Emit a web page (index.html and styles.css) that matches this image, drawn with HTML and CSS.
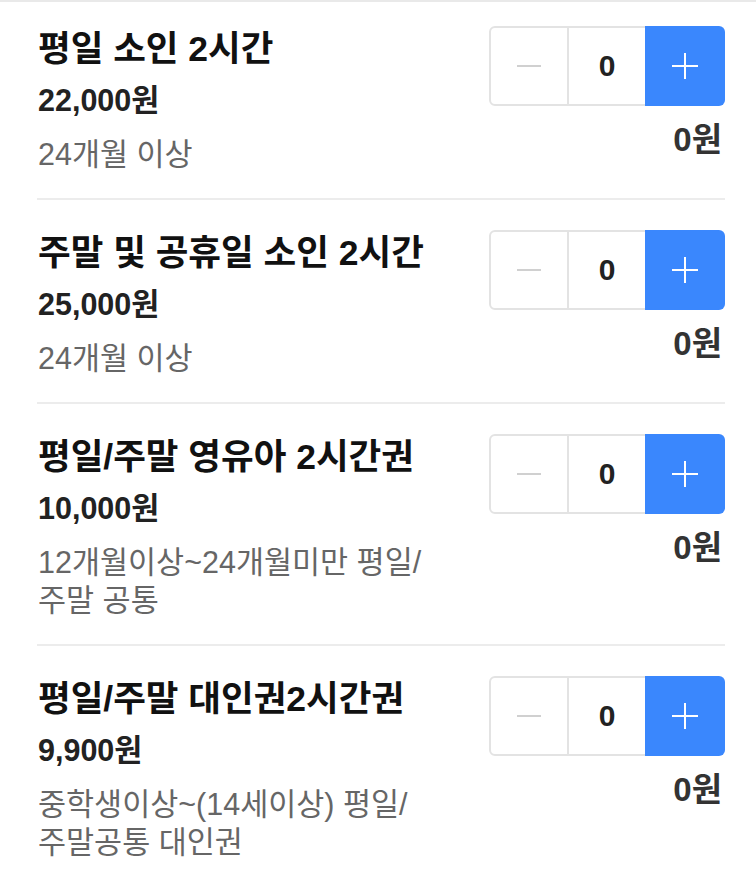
FILE: index.html
```html
<!DOCTYPE html>
<html lang="ko">
<head>
  <meta charset="UTF-8">
  <title>이용권 선택</title>
  <link rel="stylesheet" href="styles.css">
</head>
<body>
  <div class="ticket-list">
    <div class="ticket">
      <div class="info">
        <div class="name">평일 소인 2시간</div>
        <div class="price">22,000원</div>
        <div class="desc">24개월 이상</div>
      </div>
      <div class="order">
        <div class="stepper">
          <button class="minus"><span></span></button>
          <div class="count">0</div>
          <button class="plus"><span></span></button>
        </div>
        <div class="sum">0원</div>
      </div>
    </div>

    <div class="ticket">
      <div class="info">
        <div class="name">주말 및 공휴일 소인 2시간</div>
        <div class="price">25,000원</div>
        <div class="desc">24개월 이상</div>
      </div>
      <div class="order">
        <div class="stepper">
          <button class="minus"><span></span></button>
          <div class="count">0</div>
          <button class="plus"><span></span></button>
        </div>
        <div class="sum">0원</div>
      </div>
    </div>

    <div class="ticket">
      <div class="info">
        <div class="name">평일/주말 영유아 2시간권</div>
        <div class="price">10,000원</div>
        <div class="desc">12개월이상~24개월미만 평일/<wbr>주말 공통</div>
      </div>
      <div class="order">
        <div class="stepper">
          <button class="minus"><span></span></button>
          <div class="count">0</div>
          <button class="plus"><span></span></button>
        </div>
        <div class="sum">0원</div>
      </div>
    </div>

    <div class="ticket">
      <div class="info">
        <div class="name">평일/주말 대인권2시간권</div>
        <div class="price">9,900원</div>
        <div class="desc">중학생이상~(14세이상) 평일/<wbr>주말공통 대인권</div>
      </div>
      <div class="order">
        <div class="stepper">
          <button class="minus"><span></span></button>
          <div class="count">0</div>
          <button class="plus"><span></span></button>
        </div>
        <div class="sum">0원</div>
      </div>
    </div>
  </div>
</body>
</html>
```

FILE: styles.css
```css
body {
  margin: 0;
  font-family: "Liberation Sans", "Noto Sans CJK KR", sans-serif;
  background: white;
  border-top: 2px solid #e9e9e9;
}

.ticket-list {
  margin: 0 31px 0 37px;
}

.ticket {
  display: flex;
  justify-content: space-between;
  padding: 30px 0 25px;
  border-bottom: 2px solid #ececec;
}

.ticket:first-child {
  padding-top: 24px;
}

.ticket:last-child {
  border-bottom: none;
}

.info {
  width: 410px;
  padding-left: 1px;
  word-break: keep-all;
}

.name {
  font-size: 35.5px;
  font-weight: bold;
  color: #111;
  line-height: 46px;
  white-space: nowrap;
}

.price {
  margin-top: 5px;
  font-size: 30.5px;
  font-weight: bold;
  color: #222;
  line-height: 46px;
}

.desc {
  margin-top: 12px;
  font-size: 30.5px;
  color: #666;
  line-height: 38px;
}

.order {
  display: flex;
  flex-direction: column;
  align-items: flex-end;
}

.stepper {
  display: flex;
  width: 236px;
  height: 80px;
}

.stepper button {
  padding: 0;
  margin: 0;
  cursor: pointer;
  display: flex;
  align-items: center;
  justify-content: center;
  position: relative;
}

.minus {
  width: 80px;
  border: 2px solid #e3e3e3;
  border-radius: 6px 0 0 6px;
  background: white;
}

.minus span {
  width: 24px;
  height: 2px;
  background: #d0d0d0;
}

.count {
  width: 76px;
  border-top: 2px solid #e3e3e3;
  border-bottom: 2px solid #e3e3e3;
  display: flex;
  align-items: center;
  justify-content: center;
  font-size: 30px;
  font-weight: bold;
  color: #222;
}

.plus {
  width: 80px;
  border: none;
  border-radius: 0 6px 6px 0;
  background: #3a87fd;
}

.plus span {
  width: 26px;
  height: 2px;
  background: white;
}

.plus span::after {
  content: "";
  position: absolute;
  left: 39px;
  top: 27px;
  width: 2px;
  height: 26px;
  background: white;
}

.sum {
  margin-top: 13px;
  margin-right: 3px;
  font-size: 33px;
  font-weight: bold;
  color: #333;
  line-height: 42px;
}
```
